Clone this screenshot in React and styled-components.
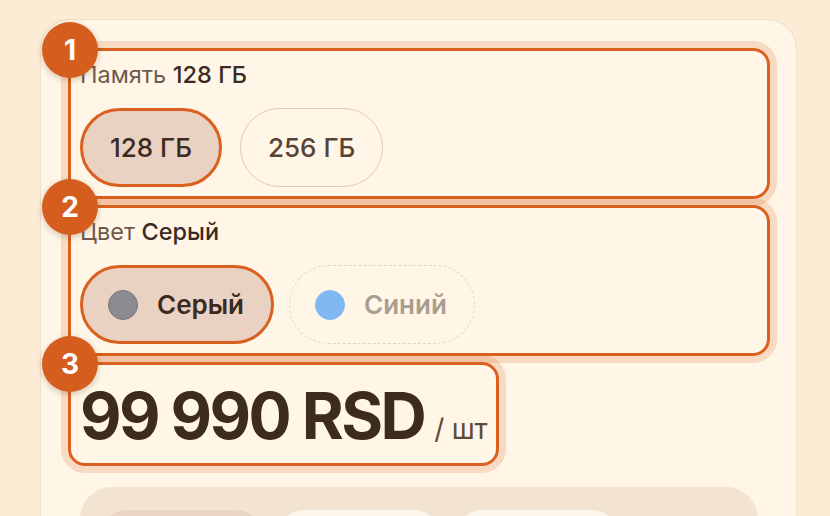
import styled, { createGlobalStyle } from "styled-components";

const GlobalStyle = createGlobalStyle`
  * { box-sizing: border-box; }
  body {
    margin: 0;
    background: #fdecd5;
    font-family: Inter, "Noto Sans", "Liberation Sans", sans-serif;
    color: #3b2a1f;
  }
`;

const memoryOptions = [
  { id: "128", label: "128 ГБ" },
  { id: "256", label: "256 ГБ" },
];

const colorOptions = [
  { id: "gray", label: "Серый", swatch: "#8d8b91", ring: "#76747a", available: true },
  { id: "blue", label: "Синий", swatch: "#80b9f2", ring: "#80b9f2", available: false },
];

const tabs = ["Характеристики", "Описание", "Отзывы"];

export default function App() {
  const memory = "128";
  const color = "gray";

  return (
    <>
      <GlobalStyle />
      <Page>
        <Card>
          <Highlight step={1}>
            <Group>
              <GroupLabel>
                Память <strong>128 ГБ</strong>
              </GroupLabel>
              <Options $gap={18}>
                {memoryOptions.map((o) => (
                  <Pill key={o.id} $active={o.id === memory}>
                    {o.label}
                  </Pill>
                ))}
              </Options>
            </Group>
          </Highlight>

          <Highlight step={2}>
            <Group>
              <GroupLabel>
                Цвет <strong>Серый</strong>
              </GroupLabel>
              <Options $gap={15}>
                {colorOptions.map((o) => (
                  <ColorPill
                    key={o.id}
                    $active={o.id === color}
                    $disabled={!o.available}
                  >
                    <Swatch $fill={o.swatch} $ring={o.ring} />
                    {o.label}
                  </ColorPill>
                ))}
              </Options>
            </Group>
          </Highlight>

          <Highlight step={3} $inline>
            <Price>
              99 990 RSD<Unit>/ шт</Unit>
            </Price>
          </Highlight>

          {/* tab strip starts at the fold; only its top edge is on screen */}
          <TabBar role="tablist">
            {tabs.map((t, i) => (
              <Tab key={t} role="tab" aria-label={t} $active={i === 0} />
            ))}
          </TabBar>
        </Card>
      </Page>
    </>
  );
}

function Highlight({ step, $inline, children }) {
  return (
    <Marked $inline={$inline}>
      {children}
      <StepBadge>{step}</StepBadge>
    </Marked>
  );
}

const Page = styled.div`
  height: 516px;
  overflow: hidden;
  padding: 19px 33px 0 40px;
`;

const Card = styled.section`
  background: #fff6e7;
  border: 1px solid #efe0cc;
  border-bottom: none;
  border-radius: 30px 30px 0 0;
  padding: 40px 38px 40px 39px;
  min-height: 600px;
  display: flex;
  flex-direction: column;
  align-items: flex-start;
  gap: 30px;
`;

const Marked = styled.div`
  position: relative;
  align-self: ${(p) => (p.$inline ? "flex-start" : "stretch")};

  &::before {
    content: "";
    position: absolute;
    inset: -12px;
    border: 3px solid #d9601e;
    border-radius: 17px;
    box-shadow: 0 0 0 7px rgba(217, 96, 30, 0.18);
    pointer-events: none;
    z-index: 1;
  }
`;

const StepBadge = styled.span`
  position: absolute;
  top: -38px;
  left: -38px;
  width: 56px;
  height: 56px;
  border-radius: 50%;
  background: #d55e1e;
  color: #fff;
  font-size: 28px;
  font-weight: 700;
  display: flex;
  align-items: center;
  justify-content: center;
  box-shadow: 0 2px 6px rgba(90, 40, 10, 0.25);
  z-index: 2;
`;

const Group = styled.div`
  display: flex;
  flex-direction: column;
  gap: 18px;
`;

const GroupLabel = styled.div`
  font-size: 23.5px;
  line-height: 30px;
  color: #6e5a4b;

  strong {
    font-weight: 500;
    color: #3b2a1f;
  }
`;

const Options = styled.div`
  display: flex;
  gap: ${(p) => p.$gap}px;
`;

const Pill = styled.button`
  height: 79px;
  padding: 0 27px;
  border-radius: 40px;
  font-family: inherit;
  font-size: 26px;
  font-weight: 500;
  color: ${(p) => (p.$active ? "#3b2a1f" : "#574333")};
  background: ${(p) => (p.$active ? "#ead2c3" : "transparent")};
  border: ${(p) => (p.$active ? "3px solid #d9601e" : "1.5px solid #dfcab2")};
`;

const ColorPill = styled(Pill)`
  display: flex;
  align-items: center;
  gap: 19px;
  padding: 0 27px 0 25px;
  font-weight: 600;
  color: ${(p) => (p.$disabled ? "#ab9d8d" : "#3b2a1f")};
  border: ${(p) =>
    p.$active
      ? "3px solid #d9601e"
      : p.$disabled
      ? "1.5px dashed #e2d5c4"
      : "1.5px solid #dfcab2"};
`;

const Swatch = styled.span`
  width: 30px;
  height: 30px;
  border-radius: 50%;
  background: ${(p) => p.$fill};
  border: 1.5px solid ${(p) => p.$ring};
  flex-shrink: 0;
`;

const Price = styled.div`
  display: flex;
  align-items: baseline;
  height: 80px;
  padding-top: 3px;
  font-size: 64px;
  line-height: 77px;
  font-weight: 700;
  letter-spacing: -0.04em;
  color: #3d2b20;
  white-space: nowrap;
`;

const Unit = styled.span`
  margin-left: 10px;
  font-size: 28px;
  line-height: 1;
  font-weight: 400;
  letter-spacing: -0.01em;
  color: #5d4a3b;
`;

const TabBar = styled.div`
  align-self: stretch;
  margin-top: 3px;
  background: #f2e4d0;
  border-radius: 32px;
  padding: 23px;
  display: flex;
  gap: 22px;
`;

const Tab = styled.button`
  width: 156px;
  height: 64px;
  border: none;
  border-radius: 22px;
  background: ${(p) => (p.$active ? "#ead4c3" : "#fdf6eb")};
`;
